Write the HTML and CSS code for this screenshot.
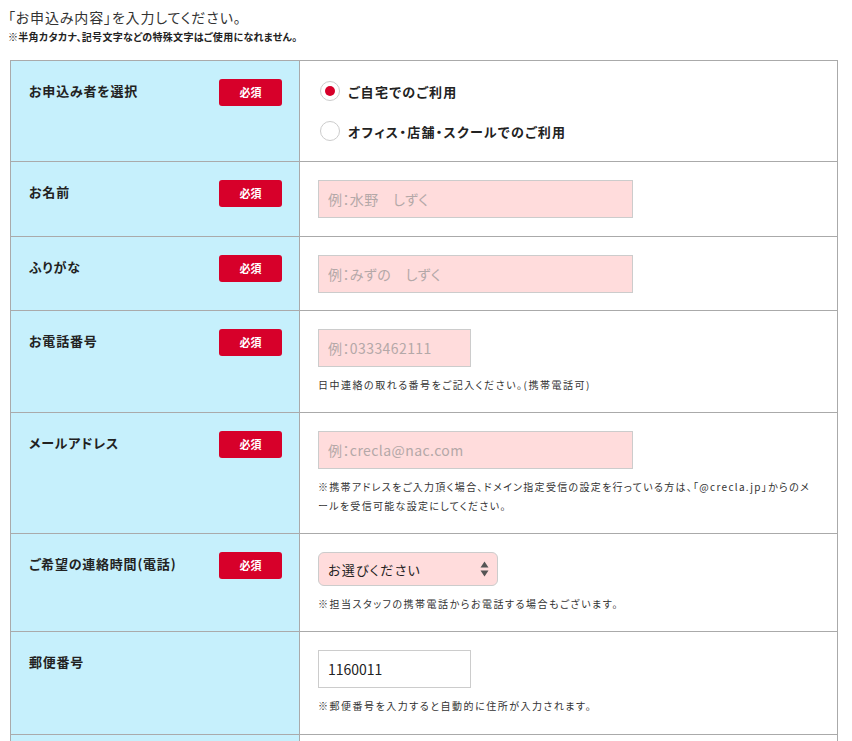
FILE: index.html
```html
<!DOCTYPE html>
<html lang="ja">
<head>
<meta charset="utf-8">
<title>お申込み内容</title>
<link rel="stylesheet" href="styles.css">
</head>
<body>
<div class="intro">
  <p class="lead">「お申込み内容」を入力してください。</p>
  <p class="caution">※半角カタカナ、記号文字などの特殊文字はご使用になれません。</p>
</div>
<div class="form">
  <div class="row">
    <div class="label"><span class="name">お申込み者を選択</span><span class="req">必須</span></div>
    <div class="field">
      <div class="radios">
        <div class="radio"><span class="dot checked"></span><span class="rtext">ご自宅でのご利用</span></div>
        <div class="radio"><span class="dot"></span><span class="rtext">オフィス・店舗・スクールでのご利用</span></div>
      </div>
    </div>
  </div>
  <div class="row">
    <div class="label"><span class="name">お名前</span><span class="req">必須</span></div>
    <div class="field"><input class="inp wide" type="text" placeholder="例：水野　しずく"></div>
  </div>
  <div class="row">
    <div class="label"><span class="name">ふりがな</span><span class="req">必須</span></div>
    <div class="field tight"><input class="inp wide" type="text" placeholder="例：みずの　しずく"></div>
  </div>
  <div class="row">
    <div class="label"><span class="name">お電話番号</span><span class="req">必須</span></div>
    <div class="field">
      <input class="inp short" type="text" placeholder="例：0333462111">
      <p class="note">日中連絡の取れる番号をご記入ください。(携帯電話可)</p>
    </div>
  </div>
  <div class="row">
    <div class="label"><span class="name">メールアドレス</span><span class="req">必須</span></div>
    <div class="field">
      <input class="inp wide" type="text" placeholder="例：crecla@nac.com">
      <p class="note long">※携帯アドレスをご入力頂く場合、ドメイン指定受信の設定を行っている方は、「@crecla.jp」からのメールを受信可能な設定にしてください。</p>
    </div>
  </div>
  <div class="row">
    <div class="label"><span class="name">ご希望の連絡時間(電話)</span><span class="req">必須</span></div>
    <div class="field">
      <div class="select"><span>お選びください</span>
        <svg class="arrows" width="9" height="16" viewBox="0 0 9 16"><path d="M4.5 0.5 L8.5 6.5 L0.5 6.5 Z M4.5 15.5 L8.5 9.5 L0.5 9.5 Z" fill="#555"/></svg>
      </div>
      <p class="note">※担当スタッフの携帯電話からお電話する場合もございます。</p>
    </div>
  </div>
  <div class="row">
    <div class="label"><span class="name">郵便番号</span></div>
    <div class="field zip">
      <input class="inp short plain" type="text" value="1160011">
      <p class="note">※郵便番号を入力すると自動的に住所が入力されます。</p>
    </div>
  </div>
  <div class="row last">
    <div class="label"></div>
    <div class="field"></div>
  </div>
</div>
</body>
</html>
```

FILE: styles.css
```css
* { box-sizing: border-box; }
html, body { margin: 0; padding: 0; background: #fff; }
body {
  font-family: "Noto Sans CJK JP", "Noto Sans", sans-serif;
  font-feature-settings: "palt";
  color: #222;
  height: 741px;
  overflow: hidden;
}
.intro { padding: 6px 0 0 8px; height: 60px; }
.lead { margin: 0; font-size: 14px; line-height: 22px; color: #333; letter-spacing: 0.06em; }
.caution { margin: 0; font-size: 10px; font-weight: bold; line-height: 18px; color: #222; letter-spacing: 0.03em; }
.form {
  margin-left: 10px;
  width: 828px;
  border: 1px solid #aaa;
  border-bottom: none;
}
.row {
  display: grid;
  grid-template-columns: 289px 537px;
  border-bottom: 1px solid #aaa;
}
.row.last { height: 60px; }
.label {
  background: #c6f0fc;
  border-right: 1px solid #aaa;
  padding: 18px 17px 17px 18px;
  display: flex;
  justify-content: space-between;
  align-items: flex-start;
}
.name {
  font-size: 13px;
  font-weight: bold;
  line-height: 24px;
  letter-spacing: 0.06em;
  color: #222;
}
.req {
  width: 63px;
  height: 27px;
  background: #d7002a;
  color: #fff;
  border-radius: 3px;
  font-size: 11px;
  font-weight: bold;
  line-height: 27px;
  text-align: center;
}
.field { padding: 18px; }
.field.tight { padding-bottom: 17px; }
.field.zip { padding-bottom: 19px; }
.radios { display: flex; flex-direction: column; gap: 16px; padding: 0 0 0 2px; }
.radio { display: flex; align-items: center; height: 24px; gap: 8px; }
.dot {
  width: 20px; height: 20px;
  border: 1px solid #ccc;
  border-radius: 50%;
  background: #fff;
  position: relative;
}
.dot.checked::after {
  content: "";
  position: absolute;
  left: 4px; top: 4px;
  width: 10px; height: 10px;
  border-radius: 50%;
  background: #d7002a;
}
.rtext { font-size: 13px; font-weight: bold; color: #222; letter-spacing: 0.1em; }
.inp {
  display: block;
  height: 38px;
  border: 1px solid #ccc;
  background: #ffdcdc;
  font-family: "Noto Sans CJK JP", "Noto Sans", sans-serif;
  font-feature-settings: "palt";
  font-size: 14px;
  letter-spacing: 0.03em;
  padding: 0 9px;
  color: #222;
  outline: none;
  margin: 0;
}
.inp::placeholder { color: #b4a8a8; }
.wide { width: 315px; }
.short { width: 153px; }
.plain { background: #fff; letter-spacing: 0; }
.note {
  margin: 8px 0 0;
  font-size: 10px;
  line-height: 19px;
  letter-spacing: 0.15em;
  color: #333;
}
.note.long { letter-spacing: 0.13em; }
.select {
  width: 180px;
  height: 34px;
  border: 1px solid #ccc;
  border-radius: 6px;
  background: #ffdcdc;
  display: flex;
  align-items: center;
  justify-content: space-between;
  padding: 0 8px 0 9px;
  font-size: 13px;
  letter-spacing: 0.1em;
  color: #222;
}
.arrows { display: block; }
```
